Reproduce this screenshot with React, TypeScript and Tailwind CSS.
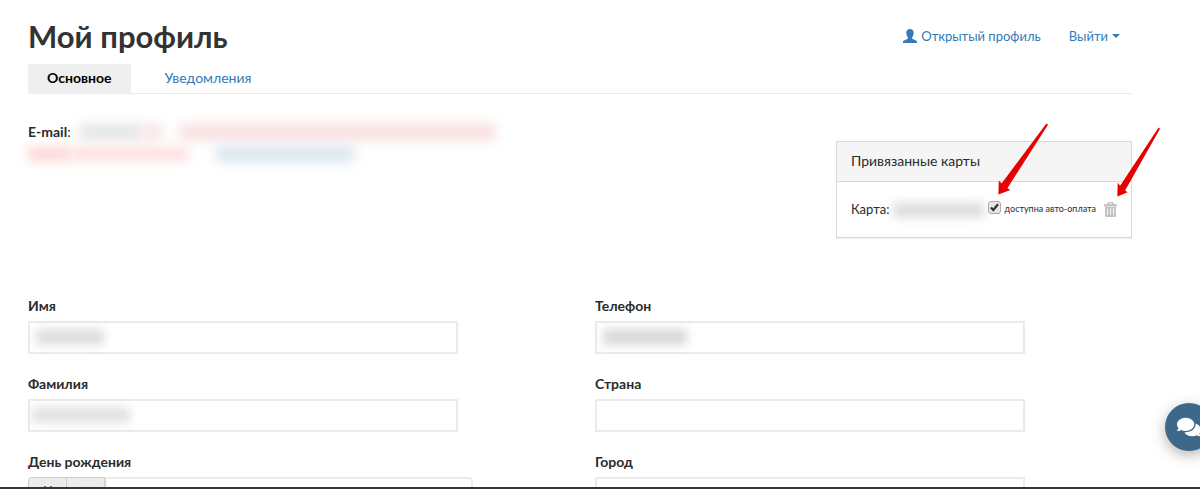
import { useState } from "react";
import { FaComments } from "react-icons/fa";

function UserIcon() {
  return (
    <svg viewBox="0 0 14 14" className="h-3.5 w-3.5 shrink-0 fill-current" aria-hidden="true">
      <path d="M7 0c2.200 0 3.700 1.500 3.700 3.600 0 1.900-.6 3.500-1.500 4.600v1c0 .4.2.6.500.8l3.300 1.400c.6.3 1 .7 1 1.300V14H0v-1.300c0-.6.4-1 1-1.300L4.300 10c.3-.2.5-.4.500-.8v-1C3.900 7.100 3.300 5.500 3.300 3.600 3.300 1.500 4.800 0 7 0z" />
    </svg>
  );
}

function TrashIcon() {
  return (
    <svg viewBox="0 0 13 15" className="h-[15px] w-[13px]" aria-hidden="true">
      <path
        fillRule="evenodd"
        fill="#c4c4c4"
        d="M3.500 2V1.200C3.500.5 4 0 4.700 0h3.600c.7 0 1.200.5 1.200 1.200V2h2.700c.5 0 .8.300.8.800V4.400H0V2.800C0 2.300.3 2 .8 2h2.700zM5 2h3v-.7H5V2zM1 5h11v8.800c0 .7-.5 1.200-1.200 1.200H2.200C1.500 15 1 14.500 1 13.800V5zm2.200 1.200v6.600H4V6.200h-.8zm2.900 0v6.600h.8V6.200h-.8zm2.900 0v6.600h.8V6.200H9z"
      />
    </svg>
  );
}

function Arrow({ className }: { className: string }) {
  return (
    <svg viewBox="0 0 50 72" preserveAspectRatio="none" className={className} aria-hidden="true">
      <path fill="#e60000" d="M48.400.600 50 1.700 9.400 65.200 12.400 67 .4 71.500.800 57.400 3.600 60.500z" />
    </svg>
  );
}

const inputClass =
  "block h-[33px] w-full border-2 border-[#ebebeb] bg-white px-2 text-sm text-[#333] outline-none";

function Field({ id, label, blurClass }: { id: string; label: string; blurClass?: string }) {
  return (
    <div className="mb-[22px] w-4/5">
      <label htmlFor={id} className="mb-2 block text-sm leading-[15px] font-bold">
        {label}
      </label>
      <div className="relative">
        <input id={id} type="text" className={inputClass} />
        {blurClass && <span aria-hidden="true" className={blurClass} />}
      </div>
    </div>
  );
}

export default function App() {
  const [autoPay, setAutoPay] = useState(true);
  return (
    <div className="flex h-screen flex-col bg-white font-['Lato','Liberation_Sans',sans-serif] text-sm text-[#2b2b2b]">
      <main className="min-h-0 flex-1 overflow-hidden pr-[68px] pl-7">
        <header className="flex h-16 items-start justify-between pt-4">
          <h1 className="text-[31px] leading-10 font-bold text-[#333]">Мой профиль</h1>
          <nav className="flex items-center gap-7 pt-2.5 pr-3 text-[13px] leading-5 text-[#337ab7]">
            <a href="#public" className="flex items-center gap-1">
              <UserIcon />
              Открытый профиль
            </a>
            <a href="#logout" className="flex items-center gap-1">
              Выйти
              <svg viewBox="0 0 8 4" className="h-1 w-2 fill-current" aria-hidden="true">
                <path d="M0 0h8L4 4z" />
              </svg>
            </a>
          </nav>
        </header>

        <nav className="flex h-[30px] border-b border-[#eaeaea] leading-7">
          <a href="#main" className="h-[30px] bg-[#efefef] px-[19px] font-bold text-black">
            Основное
          </a>
          <a href="#notifications" className="px-[34px] text-[#337ab7]">
            Уведомления
          </a>
        </nav>

        <section className="flex h-[204px] items-start justify-between">
          <div className="min-w-0 pt-7">
            <div className="flex h-5 items-center">
              <span>
                <b>E-mail</b>:
              </span>
              <span aria-hidden="true" className="ml-2 h-4 w-16 bg-[#e3e6e4] blur-[6px]" />
              <span aria-hidden="true" className="h-4 w-5 bg-[#fae4e4] blur-[6px]" />
              <span aria-hidden="true" className="ml-4 h-4 w-[316px] bg-[#f9dede] blur-[6px]" />
            </div>
            <div aria-hidden="true" className="flex h-6 items-center">
              <span className="h-4 w-11 bg-[#ffdcdc] blur-[5px]" />
              <span className="h-4 w-[116px] bg-[#ffe2e3] blur-[5px]" />
              <span className="ml-7 h-4 w-[138px] bg-[#dbe5ef] blur-[6px]" />
            </div>
          </div>

          <section className="relative mt-[47px] w-[296px] shrink-0 border border-[#d9d9d9] bg-white shadow-[0_1px_1px_rgba(0,0,0,0.06)]">
            <h2 className="h-10 border-b border-[#d9d9d9] bg-[#f5f5f5] px-3.5 leading-[38px]">
              Привязанные карты
            </h2>
            <div className="flex h-[55px] items-center px-3.5">
              <span className="text-[13px]">Карта:</span>
              <span aria-hidden="true" className="mx-1 h-4 flex-1 bg-[#dfdfdf] blur-[5px]" />
              <label className="flex items-center gap-1 text-[9px]">
                <span className="relative -mt-1 h-[13px] w-[13px]">
                  <input
                    type="checkbox"
                    checked={autoPay}
                    onChange={(e) => setAutoPay(e.target.checked)}
                    className="peer block h-[13px] w-[13px] appearance-none rounded-[3px] border border-[#aaa] bg-[#e7e7e7]"
                  />
                  <svg
                    viewBox="0 0 13 13"
                    className="pointer-events-none absolute inset-0 hidden peer-checked:block"
                    aria-hidden="true"
                  >
                    <path d="M3 6.500 5.300 9 10 3.200" fill="none" stroke="#333" strokeWidth="2.200" />
                  </svg>
                </span>
                доступна авто-оплата
              </label>
              <button type="button" aria-label="Удалить карту" className="ml-2">
                <TrashIcon />
              </button>
            </div>
            <Arrow className="pointer-events-none absolute -top-[19px] left-[161px] h-[72px] w-[50px]" />
            <Arrow className="pointer-events-none absolute -top-[15px] left-[280px] h-[70px] w-[43px]" />
          </section>
        </section>

        <form className="grid grid-cols-2 gap-x-[30px]">
          <div>
            <Field id="first-name" label="Имя" blurClass="absolute top-2 left-2 h-4 w-[68px] bg-[#dedede] blur-[5px]" />
            <Field id="last-name" label="Фамилия" blurClass="absolute top-2 left-1 h-4 w-[98px] bg-[#e1e3e2] blur-[5px]" />
            <div className="w-[calc(80%+15px)]">
              <label htmlFor="birthday" className="mb-2 block text-sm leading-[15px] font-bold">
                День рождения
              </label>
              <div className="flex h-[33px]">
                <button
                  type="button"
                  aria-label="Открыть календарь"
                  className="flex w-[39px] justify-center rounded-l border border-[#ccc] bg-[#ececec] pt-2 text-[#777]"
                >
                  <svg viewBox="0 0 12 12" className="h-3 w-3" aria-hidden="true">
                    <path d="M1 2h10v9H1zM3 0v3M9 0v3M1 5h10" fill="none" stroke="currentColor" strokeWidth="2" />
                  </svg>
                </button>
                <button
                  type="button"
                  aria-label="Очистить дату"
                  className="flex w-[38px] justify-center border border-l-0 border-[#ccc] bg-[#ececec] pt-2 text-[#bbb]"
                >
                  <svg viewBox="0 0 10 10" className="h-2.5 w-2.5" aria-hidden="true">
                    <path d="m1 1 8 8M9 1 1 9" stroke="currentColor" strokeWidth="2" />
                  </svg>
                </button>
                <input
                  id="birthday"
                  type="text"
                  className="min-w-0 flex-1 rounded-r border-2 border-[#ebebeb] px-2 outline-none"
                />
              </div>
            </div>
          </div>
          <div>
            <Field id="phone" label="Телефон" blurClass="absolute top-2 left-2 h-4 w-[84px] bg-[#d9d9d9] blur-[5px]" />
            <Field id="country" label="Страна" />
            <Field id="city" label="Город" />
          </div>
        </form>
      </main>
      <button
        type="button"
        aria-label="Открыть чат"
        className="fixed -right-[13px] bottom-[38px] flex h-12 w-12 items-center justify-center rounded-full bg-[#3d6889] text-white shadow-[0_4px_14px_rgba(0,0,0,0.3)]"
      >
        <FaComments className="h-6 w-6" />
      </button>
      <footer className="h-0.5 shrink-0 bg-[#35343a]" />
    </div>
  );
}
